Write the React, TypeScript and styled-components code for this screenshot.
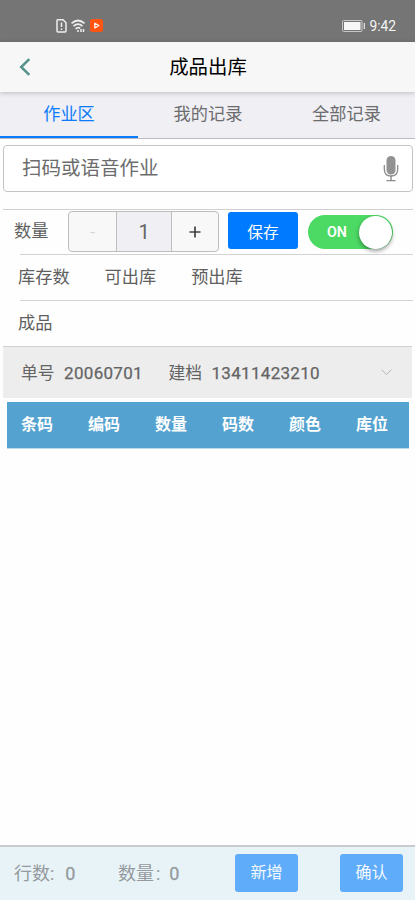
import React from "react";
import styled, { createGlobalStyle } from "styled-components";

const Global = createGlobalStyle`
  *, *::before, *::after { box-sizing: border-box; }
  body { margin: 0; background: #fff; }
  button { font: inherit; border: 0; padding: 0; margin: 0; }
`;

const Screen = styled.div`
  width: 415px;
  height: 900px;
  display: flex;
  flex-direction: column;
  overflow: hidden;
  background: #fefefe;
  color: #5f5f5f;
  font-family: Roboto, "Noto Sans CJK SC", sans-serif;
  font-weight: 400;
  font-size: 17.2px;
  line-height: 24px;
  white-space: nowrap;
`;

const StatusBar = styled.div`
  flex: none;
  height: 42px;
  display: flex;
  justify-content: space-between;
  align-items: center;
  padding: 9px 19px 0 56px;
  background: #757575;
  color: #f4f4f4;
`;

const StatusGroup = styled.div<{ $gap: number }>`
  display: flex;
  align-items: center;
  gap: ${(p) => p.$gap}px;
  font-size: 13.8px;
`;

const Header = styled.header`
  flex: none;
  height: 50px;
  display: grid;
  grid-template-columns: 51px 1fr 50px;
  align-items: center;
  background: #f7f7f7;
  box-shadow: 0 1px 5px rgba(0, 0, 0, 0.22);
  z-index: 1;
`;

const BackButton = styled.button`
  display: flex;
  padding-left: 19px;
  background: none;
`;

const Title = styled.h1`
  margin: 0;
  padding-top: 1px;
  color: #000;
  font-size: 19.4px;
  font-weight: 400;
  text-align: center;
`;

const Tabs = styled.nav`
  flex: none;
  height: 47px;
  display: grid;
  grid-template-columns: 138px 140px 137px;
  background: #efeff4;
  border-bottom: 1px solid #bcbcc0;
`;

const Tab = styled.div<{ $active?: boolean }>`
  padding-top: 10px;
  text-align: center;
  color: ${(p) => (p.$active ? "#0a7cfb" : "#6c6c6e")};
  border-bottom: ${(p) => (p.$active ? "2px solid #0a7cfb" : "0")};
`;

const ScanField = styled.div`
  flex: none;
  height: 47px;
  margin: 6px 2px 17px 3px;
  padding: 0 13px 0 18px;
  display: flex;
  align-items: center;
  justify-content: space-between;
  border: 1px solid #c4c4c4;
  border-radius: 4px;
  background: #fff;
  color: #6c6c6c;
  font-size: 19.5px;
`;

const ScanHint = styled.span`
  padding-top: 1px;
`;

const QuantityRow = styled.div`
  flex: none;
  height: 45px;
  margin: 0 2px 0 3px;
  padding: 1px 0 0 11px;
  display: flex;
  border-top: 1px solid #cfcfcf;
`;

const QuantityLabel = styled.span`
  width: 54px;
  padding-top: 8px;
`;

const Stepper = styled.div`
  width: 151px;
  height: 41px;
  display: grid;
  grid-template-columns: 47px 56px 1fr;
  border: 1px solid #bdbdbd;
  border-radius: 4px;
  overflow: hidden;
  background: #f8f8f8;
`;

const StepCell = styled.div<{ $kind: "minus" | "value" | "plus" }>`
  display: flex;
  align-items: center;
  justify-content: center;
  font-size: ${(p) => (p.$kind === "value" ? 20 : 17)}px;
  color: ${(p) => (p.$kind === "minus" ? "#d4d4d4" : p.$kind === "plus" ? "#333" : "#666")};
  background: ${(p) => (p.$kind === "value" ? "#efeff4" : "transparent")};
  border: solid #bdbdbd;
  border-width: ${(p) => (p.$kind === "value" ? "0 1px" : "0")};
`;

const SaveButton = styled.button`
  width: 70px;
  height: 37px;
  margin: 1px 0 0 9px;
  padding-top: 4px;
  border-radius: 3px;
  background: #007aff;
  color: #fff;
  font-size: 15.8px;
`;

const Toggle = styled.div`
  width: 85px;
  height: 34px;
  margin: 4px 0 0 10px;
  padding: 0 1px 0 19px;
  display: flex;
  align-items: center;
  justify-content: space-between;
  border-radius: 17px;
  background: #4cd964;
  color: #fff;
  font-size: 14.3px;
  font-weight: 600;
`;

const Knob = styled.span`
  width: 33px;
  height: 33px;
  border-radius: 50%;
  background: #fff;
  box-shadow: 0 2px 4px rgba(0, 0, 0, 0.4);
`;

const InfoRow = styled.div`
  flex: none;
  height: 46px;
  margin: 0 2px 0 20px;
  display: flex;
  gap: 35px;
  padding-top: 10px;
  border-top: 1px solid #d2d2d2;
`;

const InfoLabel = styled.span`
  margin-left: -2px;
  margin-right: 2px;
`;

const OrderBar = styled.div`
  flex: none;
  height: 52px;
  margin: 0 3px;
  padding: 0 20px 0 18px;
  display: flex;
  align-items: center;
  border-top: 1px solid #cfcfcf;
  background: #ededed;
  color: #646464;
`;

const OrderLabel = styled.span`
  font-size: 16.8px;
`;

const OrderNumber = styled.span<{ $after: number }>`
  margin: 0 ${(p) => p.$after}px 0 9.5px;
  font-size: 17px;
  letter-spacing: 0.3px;
  -webkit-text-stroke: 0.25px currentColor;
`;

const Chevron = styled.span`
  margin-left: auto;
  display: flex;
`;

const TableHead = styled.div`
  flex: none;
  height: 47px;
  margin: 4px 6px 0 7px;
  padding: 1px 3px 1px 14px;
  display: grid;
  grid-template-columns: repeat(5, 67px) 1fr;
  align-items: center;
  border-bottom: 1px solid #b9dced;
  background: #54a2d0;
  color: #fff;
  font-size: 16px;
  font-weight: 700;
`;

const Footer = styled.footer`
  flex: none;
  height: 55px;
  margin-top: auto;
  padding: 7px 12px 0 14px;
  display: flex;
  border-top: 2px solid #c8cccd;
  background: #e8f3f8;
  color: #949a9d;
  font-size: 18px;
`;

const Total = styled.div<{ $width: number; $gap: number }>`
  width: ${(p) => p.$width}px;
  padding-top: 8px;
  display: flex;
  gap: ${(p) => p.$gap}px;
`;

const Count = styled.span`
  -webkit-text-stroke: 0.3px currentColor;
`;

const Colon = styled.span`
  margin-left: 2px;
`;

const ActionButton = styled.button<{ $after?: number }>`
  width: 63px;
  height: 38px;
  margin-right: ${(p) => p.$after ?? 0}px;
  border-radius: 3px;
  background: #5eacfa;
  color: #f5faff;
  font-size: 16px;
`;

const SimIcon = () => (
  <svg width="11" height="14" viewBox="0 0 11 14" fill="none" stroke="#eee" strokeWidth="1.5">
    <path d="M1 1.5Q1 .8 1.8.8H7L10 3.8V12Q10 13 9 13H2Q1 13 1 12Z" />
    <path d="M5.5 3.5V8M5.5 9.5V11" />
  </svg>
);

const WifiIcon = () => (
  <svg width="15" height="14" viewBox="0 0 15 14" fill="none" stroke="#eee" strokeWidth="1.7">
    <path d="M.5 4.4Q7-1.4 13.5 4.4M2.5 7.2Q7 3 11.5 7.2M4.6 10Q7 7.4 9.2 9.4" />
    <path d="M6 12H8M10 10V13M12.5 10V13" strokeWidth="1.5" />
  </svg>
);

const VideoIcon = () => (
  <svg width="13" height="13" viewBox="0 0 13 13">
    <rect width="13" height="13" rx="2.5" fill="#ff5511" />
    <path d="M4.8 4.2L8.8 6.6L4.8 9Z" fill="none" stroke="#fff" strokeWidth="1.2" strokeLinejoin="round" />
  </svg>
);

const BatteryIcon = () => (
  <svg width="24" height="12" viewBox="0 0 24 12">
    <rect x=".5" y=".5" width="19.5" height="11" rx="1" fill="none" stroke="#c8c8c8" />
    <rect x="2" y="2" width="16.5" height="8" fill="#f6f6f6" />
    <path d="M22.3 3V9" stroke="#ddd" strokeWidth="1.3" />
  </svg>
);

const BackIcon = () => (
  <svg width="12" height="18" viewBox="0 0 12 18" fill="none" stroke="#56938a" strokeWidth="2.5">
    <path d="M10.3 1.2L2.2 9L10.3 16.8" />
  </svg>
);

const MicIcon = () => (
  <svg width="16" height="26" viewBox="0 0 16 26" fill="none" stroke="#8b8b8b">
    <rect x="3.5" y="0" width="9" height="18.5" rx="4.5" fill="#929292" stroke="none" />
    <path d="M1.3 9V13Q1.3 20 8 20Q14.7 20 14.7 13V9" strokeWidth="1.3" />
    <path d="M8 20V24.6M3.5 24.6H12.5" strokeWidth="1.4" />
  </svg>
);

const columns = ["条码", "编码", "数量", "码数", "颜色", "库位"];
const stocks = ["库存数", "可出库", "预出库"];

export default function App() {
  return (
    <>
      <Global />
      <Screen>
        <StatusBar>
          <StatusGroup $gap={4}><SimIcon /><WifiIcon /><VideoIcon /></StatusGroup>
          <StatusGroup $gap={3}><BatteryIcon /><span>9:42</span></StatusGroup>
        </StatusBar>
        <Header>
          <BackButton aria-label="返回"><BackIcon /></BackButton>
          <Title>成品出库</Title>
        </Header>
        <Tabs>
          <Tab $active>作业区</Tab>
          <Tab>我的记录</Tab>
          <Tab>全部记录</Tab>
        </Tabs>
        <ScanField><ScanHint>扫码或语音作业</ScanHint><MicIcon /></ScanField>
        <QuantityRow>
          <QuantityLabel>数量</QuantityLabel>
          <Stepper>
            <StepCell $kind="minus">-</StepCell>
            <StepCell $kind="value">1</StepCell>
            <StepCell $kind="plus">
              <svg width="12" height="12" viewBox="0 0 12 12" stroke="#444" strokeWidth="1.7">
                <path d="M6 .5V11.5M.5 6H11.5" />
              </svg>
            </StepCell>
          </Stepper>
          <SaveButton>保存</SaveButton>
          <Toggle>ON<Knob /></Toggle>
        </QuantityRow>
        <InfoRow>{stocks.map((s) => <InfoLabel key={s}>{s}</InfoLabel>)}</InfoRow>
        <InfoRow><InfoLabel>成品</InfoLabel></InfoRow>
        <OrderBar>
          <OrderLabel>单号</OrderLabel>
          <OrderNumber $after={25.5}>20060701</OrderNumber>
          <OrderLabel>建档</OrderLabel>
          <OrderNumber $after={0}>13411423210</OrderNumber>
          <Chevron>
            <svg width="11" height="7" viewBox="0 0 11 7" fill="none" stroke="#b5b5b5">
              <path d="M.7 .7L5.5 5.7L10.3 .7" />
            </svg>
          </Chevron>
        </OrderBar>
        <TableHead>{columns.map((c) => <span key={c}>{c}</span>)}</TableHead>
        <Footer>
          <Total $width={104} $gap={11}><span>行数:</span><Count>0</Count></Total>
          <Total $width={117} $gap={9}><span>数量<Colon>:</Colon></span><Count>0</Count></Total>
          <ActionButton $after={42}>新增</ActionButton>
          <ActionButton>确认</ActionButton>
        </Footer>
      </Screen>
    </>
  );
}
